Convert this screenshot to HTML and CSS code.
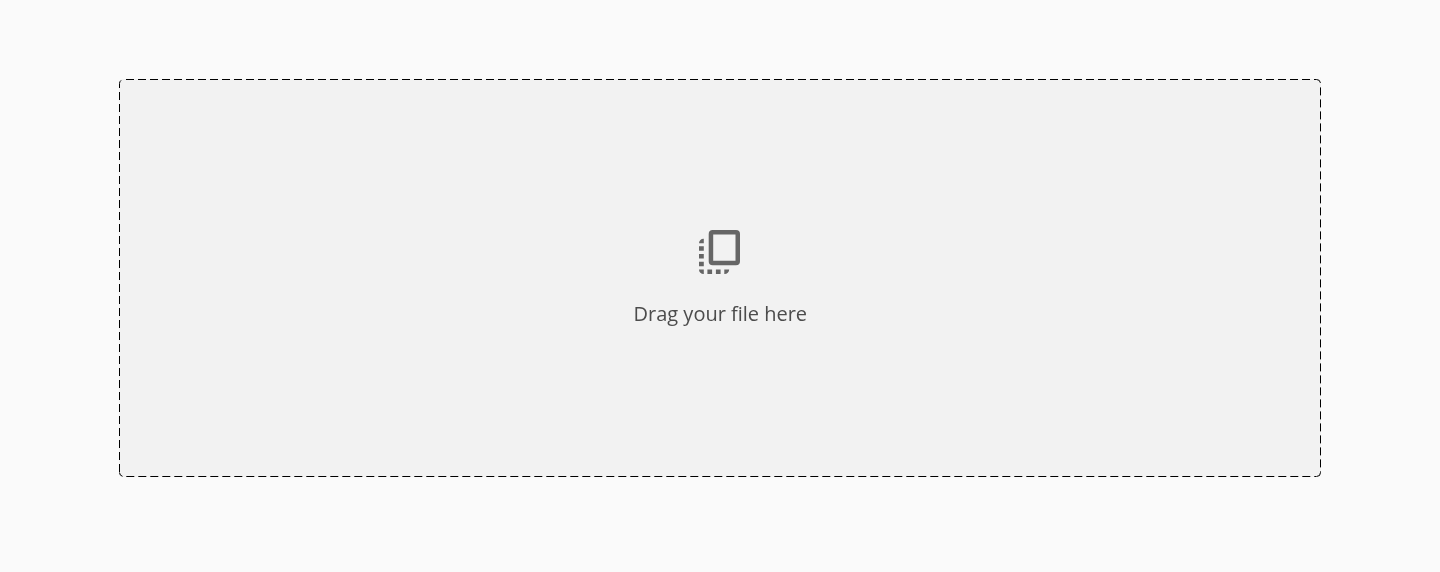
FILE: index.html
```
<!DOCTYPE html>
<html lang="en">
<head>
<meta charset="utf-8">
<title>File upload</title>
<link rel="stylesheet" href="styles.css">
</head>
<body>
<main class="dropzone">
  <svg class="dropzone-outline" viewBox="0 0 1202 398" aria-hidden="true">
    <path d="M7 .5H1197.500a4 4 0 0 1 4 4"/>
    <path d="M1201.500 8.400V393.500a4 4 0 0 1-4 4"/>
    <path d="M1203.300 397.500H7" clip-path="inset(0 6px 0 0)"/>
    <path class="corner" d="M3.500 397.300A4 4 0 0 1 .5 393.500"/>
    <path d="M.5 393V4.500a4 4 0 0 1 3-3.800"/>
  </svg>
  <svg class="dropzone-icon" viewBox="0 0 42 45" aria-hidden="true">
    <path fill-rule="evenodd" d="M13.700 0h23.300a4 4 0 0 1 4 4v27.200a4 4 0 0 1-4 4H13.700a4 4 0 0 1-4-4V4a4 4 0 0 1 4-4ZM14.200 4.500v26.200h22.300V4.500Z"/>
    <path d="M0 13.200a4.500 4.500 0 0 1 4.800-4.500v4.500ZM0 16.300h4.800v4.500H0ZM0 24h4.800v4.500H0ZM0 31.700h4.800v4.500H0ZM0 39.400h4.800V44A4.500 4.500 0 0 1 0 39.400ZM8.400 39.400h4.700V44H8.400ZM16.900 39.400h4.700V44h-4.700ZM25.300 39.400h4.900A4.500 4.500 0 0 1 25.300 44Z"/>
  </svg>
  <p class="dropzone-label">Drag your file here</p>
</main>
</body>
</html>
```
FILE: styles.css
```
body {
  margin: 0;
  padding: 79px 119px;
  background: #fafafa;
}
.dropzone {
  position: relative;
  box-sizing: border-box;
  width: 1202px;
  height: 398px;
  padding-top: 151px;
  border-radius: 4px;
  background: #f2f2f2;
  display: flex;
  flex-direction: column;
  align-items: center;
}
.dropzone-outline {
  position: absolute;
  inset: 0;
  width: 100%;
  height: 100%;
  overflow: hidden;
  fill: none;
  stroke: #000;
  stroke-width: 1;
  stroke-dasharray: 8 4;
}
.dropzone-outline .corner {
  stroke-dasharray: none;
}
.dropzone-icon {
  width: 42px;
  height: 45px;
  fill: #666;
}
.dropzone-label {
  margin: 25px 0 0;
  padding-left: 0.6px;
  font: 20px/28px "Open Sans", sans-serif;
  letter-spacing: -0.015px;
  color: #4c4c4c;
  will-change: transform;
}
```
